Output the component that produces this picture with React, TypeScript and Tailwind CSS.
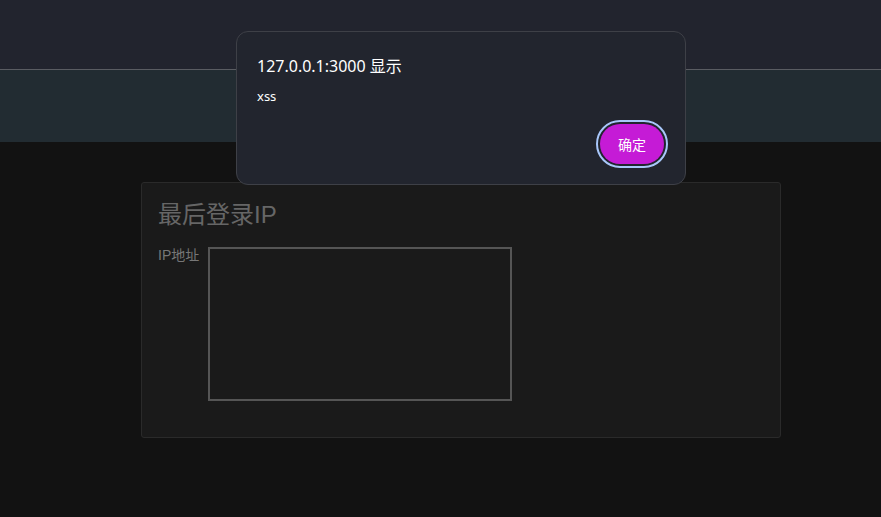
export default function App() {
  return (
    <div className="relative w-[881px] h-[517px] overflow-hidden bg-[#121212] font-['Liberation_Sans','Noto_Sans_CJK_SC',sans-serif]">
      {/* top bar */}
      <div className="h-[69px] bg-[#22242e] border-b border-[#5a5c62] box-content" />
      {/* band */}
      <div className="h-[72px] bg-[#222c32]" />

      {/* card */}
      <div className="ml-[141px] mt-[40px] w-[640px] h-[256px] rounded-[3px] border border-[#2a2a2a] bg-[#1a1a1a] px-4 pt-[14px]">
        <h2 className="text-[24px] leading-[36px] text-[#666]">最后登录IP</h2>
        <div className="mt-[14px] flex gap-2">
          <label className="w-[42px] text-[14px] leading-[20px] text-[#777] -mt-[2px]">IP地址</label>
          <textarea className="w-[304px] h-[154px] resize-none border-2 border-[#555] bg-[#1a1a1a] outline-none" />
        </div>
      </div>

      {/* alert dialog */}
      <div className="absolute left-[236px] top-[31px] w-[450px] h-[154px] rounded-[12px] border border-[#3e4047] bg-[#22252e] px-5 pt-[20px] font-['Noto_Sans','Noto_Sans_CJK_SC',sans-serif] text-white">
        <div className="text-[16px] leading-[28px]">127.0.0.1:3000 显示</div>
        <div className="mt-[6px] text-[13px] leading-[20px]">xss</div>
        <div className="absolute right-[21px] bottom-[20px]">
          <button className="h-[40px] w-[64px] rounded-full bg-[#c51bd6] text-[14px] text-white outline-2 outline-offset-2 outline-[#a8c7fa]">
            确定
          </button>
        </div>
      </div>
    </div>
  );
}
